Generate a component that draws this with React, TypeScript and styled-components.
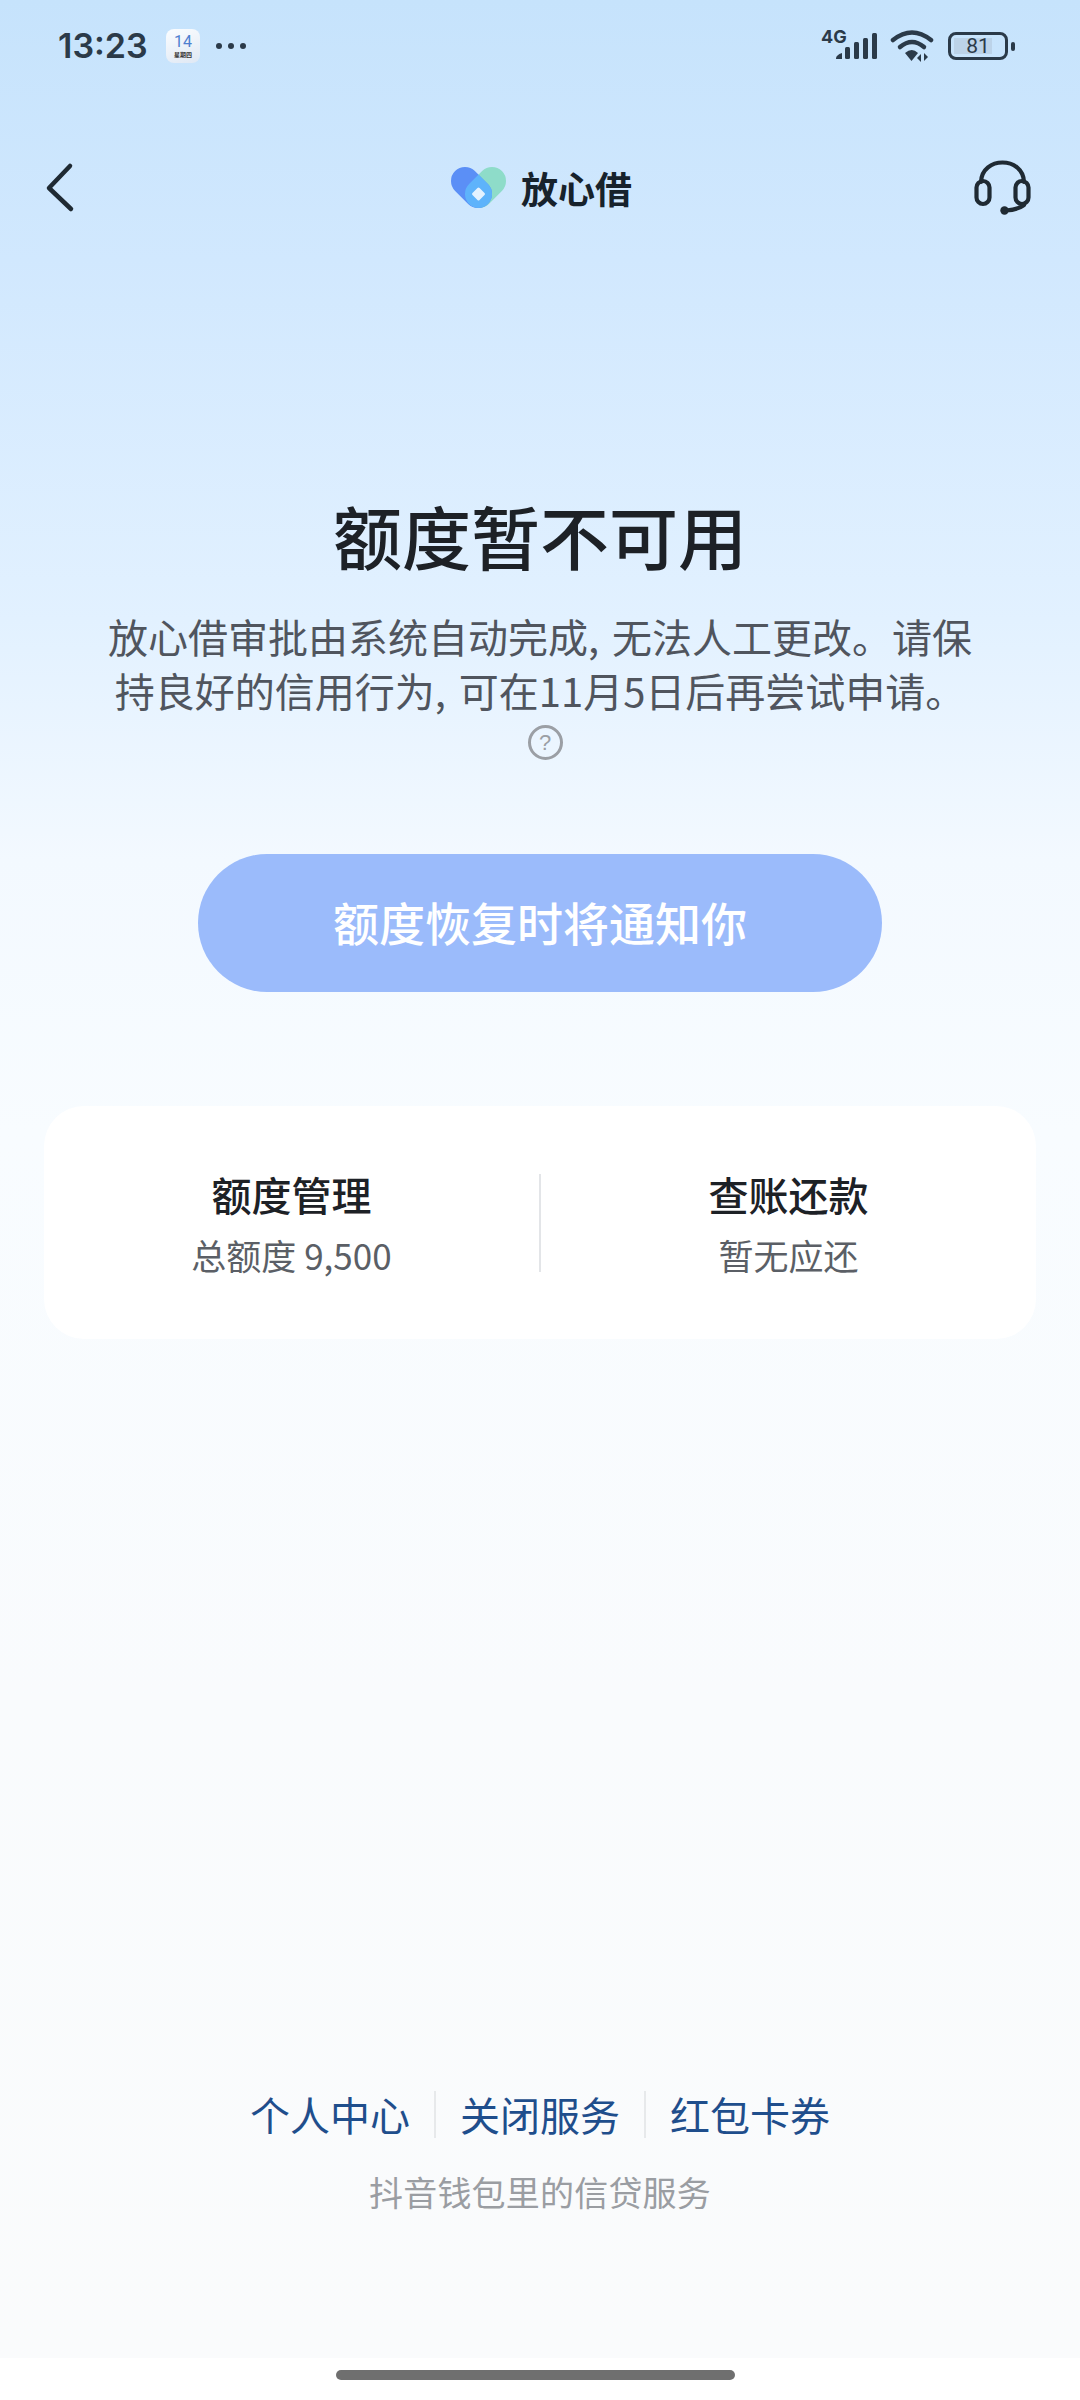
import styled, { createGlobalStyle } from "styled-components";

const GlobalStyle = createGlobalStyle`
  html, body {
    margin: 0;
    padding: 0;
    background: #fff;
    font-family: "Noto Sans CJK SC", "Noto Sans", sans-serif;
  }
`;

const Page = styled.div`
  width: 1080px;
  height: 2400px;
  display: flex;
  flex-direction: column;
  overflow: hidden;
  background: #fff;
`;

const Screen = styled.div`
  height: 2358px;
  display: flex;
  flex-direction: column;
  align-items: center;
  background: linear-gradient(
    180deg,
    #c6e3fc 0,
    #d1e8fe 260px,
    #e2f1ff 620px,
    #f3f9ff 860px,
    #f8fcff 1130px,
    #f9fbfd 1700px,
    #fafbfc 2358px
  );
`;

const StatusBar = styled.div`
  align-self: stretch;
  height: 92px;
  display: flex;
  align-items: center;
  justify-content: space-between;
  padding: 0 65px 0 58px;
  color: #2b3a49;
`;

const StatusGroup = styled.div`
  display: flex;
  align-items: center;
`;

const Clock = styled.span`
  font-family: Inter, Roboto, sans-serif;
  font-size: 34px;
  font-weight: 600;
  line-height: 1;
  width: 108px;
`;

const CalendarIcon = styled.div`
  width: 34px;
  height: 34px;
  border-radius: 8px;
  background: linear-gradient(160deg, #fbfdff, #dfe8f4);
  display: flex;
  flex-direction: column;
  align-items: center;
  margin-right: 16px;
`;

const CalendarDay = styled.span`
  font-family: Roboto, sans-serif;
  font-size: 16px;
  line-height: 18px;
  margin-top: 4px;
  color: #4f7fd0;
`;

const CalendarWeek = styled.span`
  font-size: 6px;
  line-height: 7px;
  font-weight: 700;
  color: #333;
`;

const MoreDots = styled.div`
  display: flex;
  gap: 6px;
`;

const Dot = styled.i`
  width: 6px;
  height: 6px;
  border-radius: 50%;
  background: #2b3a49;
`;

const SignalWrap = styled.div`
  position: relative;
  width: 58px;
  height: 32px;
  margin-right: 11px;
`;

const NetworkLabel = styled.span`
  position: absolute;
  left: 0;
  top: -3px;
  font-family: Inter, Roboto, sans-serif;
  font-size: 18px;
  line-height: 20px;
  font-weight: 700;
`;

const Battery = styled.div`
  position: relative;
  width: 60px;
  height: 28px;
  box-sizing: border-box;
  border: 3px solid #2b3a49;
  border-radius: 8px;
  margin-left: 14px;
  margin-right: 3px;
  display: flex;
  align-items: center;
  justify-content: center;
`;

const BatteryFill = styled.div`
  position: absolute;
  left: 3px;
  top: 3px;
  bottom: 3px;
  background: #bcd3e9;
`;

const BatteryValue = styled.span`
  position: relative;
  font-family: Roboto, sans-serif;
  font-size: 21px;
  line-height: 1;
`;

const BatteryNub = styled.i`
  width: 4px;
  height: 9px;
  border-radius: 2px;
  background: #2b3a49;
`;

const NavBar = styled.div`
  align-self: stretch;
  height: 192px;
  display: flex;
  align-items: center;
  justify-content: space-between;
  padding: 0 48px 0 44px;
`;

const Logo = styled.div`
  display: flex;
  align-items: center;
  gap: 15px;
  margin-left: 31px;
`;

const LogoText = styled.span`
  font-size: 37px;
  font-weight: 700;
  line-height: 1;
  color: #17222c;
`;

const Title = styled.h1`
  margin: 207px 0 0;
  font-size: 69px;
  line-height: 88px;
  font-weight: 500;
  color: #1d2126;
`;

const Description = styled.p`
  margin: 30px 0 0;
  width: 890px;
  font-size: 40px;
  line-height: 54px;
  word-spacing: 4px;
  color: #50555e;
  text-align: center;
`;

const HelpIcon = styled.span`
  display: inline-flex;
  align-items: center;
  justify-content: center;
  box-sizing: border-box;
  width: 35px;
  height: 35px;
  margin: 8px 0 0 10px;
  border: 3px solid #9b9fa5;
  border-radius: 50%;
  font-family: "Liberation Sans", sans-serif;
  font-size: 22px;
  line-height: 1;
  color: #9b9fa5;
  vertical-align: top;
`;

const NotifyButton = styled.button`
  margin-top: 83px;
  width: 684px;
  height: 138px;
  border: 0;
  border-radius: 69px;
  padding: 0 0 5px;
  background: #9bbbfb;
  color: #fff;
  font-family: inherit;
  font-size: 46px;
  font-weight: 500;
`;

const Card = styled.div`
  margin-top: 114px;
  width: 992px;
  height: 233px;
  border-radius: 40px;
  background: #fff;
  display: flex;
  align-items: center;
`;

const CardItem = styled.div`
  flex: 1;
  display: flex;
  flex-direction: column;
  align-items: center;
  gap: 11px;
`;

const CardDivider = styled.div`
  width: 2px;
  height: 98px;
  background: #e3e5e8;
`;

const CardTitle = styled.div`
  font-size: 40px;
  line-height: 54px;
  font-weight: 500;
  color: #1d2126;
`;

const CardSub = styled.div`
  font-size: 35px;
  line-height: 46px;
  color: #5b5f66;
`;

const Footer = styled.div`
  margin-top: auto;
  margin-bottom: 143px;
  display: flex;
  flex-direction: column;
  align-items: center;
  gap: 31px;
`;

const LinkRow = styled.div`
  display: flex;
  align-items: center;
`;

const FooterLink = styled.a`
  font-size: 40px;
  line-height: 48px;
  color: #1f4e8c;
`;

const LinkDivider = styled.i`
  width: 2px;
  height: 47px;
  margin: 0 24px;
  background: #e7e9eb;
`;

const FooterNote = styled.div`
  font-size: 34px;
  line-height: 46px;
  letter-spacing: 0.2px;
  color: #9a9da2;
`;

const HomeArea = styled.div`
  flex: 1;
  display: flex;
  justify-content: center;
  padding-top: 12px;
`;

const HomeBar = styled.div`
  width: 399px;
  height: 10px;
  margin-right: 9px;
  border-radius: 5px;
  background: #6f6f6f;
`;

const SignalBars = () => (
  <svg width="58" height="32" viewBox="0 0 58 32" style={{ position: "absolute", left: 0, top: 0 }}>
    <g fill="#2b3a49">
      <path d="M15 28.5 Q15 25 21 23 V29 H15Z" />
      <rect x="24" y="17" width="5" height="12" rx="1.5" />
      <rect x="33" y="12" width="5" height="17" rx="1.5" />
      <rect x="42" y="8" width="5" height="21" rx="1.5" />
      <rect x="51" y="3" width="5" height="26" rx="1.5" />
    </g>
  </svg>
);

const WifiIcon = () => (
  <svg width="44" height="34" viewBox="0 0 44 34">
    <g fill="none" stroke="#2b3a49" strokeWidth="4.5" strokeLinecap="round">
      <path d="M3 11 Q22 -4 41 11" />
      <path d="M10 18 Q22 8 34 18" />
    </g>
    <path d="M15 24 Q22 18 28 24 L21.5 32Z" fill="#2b3a49" />
    <path d="M31 33V25l-4 4ZM34 24v8l4-4Z" fill="#2b3a49" />
  </svg>
);

const BackIcon = () => (
  <svg width="34" height="52" viewBox="0 0 34 52">
    <path d="M26 4 L5 26 L27 47" fill="none" stroke="#1f2a33" strokeWidth="4.5" strokeLinecap="round" strokeLinejoin="round" />
  </svg>
);

const LogoIcon = () => (
  <svg width="55" height="43" viewBox="0 0 55 43">
    <defs>
      <clipPath id="logo-overlap">
        <rect x="-14" y="-14" width="46.4" height="28" rx="14" transform="translate(14 14) rotate(45)" />
      </clipPath>
    </defs>
    <rect x="-14" y="-14" width="46.4" height="28" rx="14" fill="#8edcc9" transform="translate(41 14) rotate(135)" />
    <rect x="-14" y="-14" width="46.4" height="28" rx="14" fill="#5b8ff6" transform="translate(14 14) rotate(45)" />
    <g clipPath="url(#logo-overlap)">
      <rect x="-14" y="-14" width="46.4" height="28" rx="14" fill="#5eb3fb" transform="translate(41 14) rotate(135)" />
    </g>
    <rect x="-5" y="-5" width="10" height="10" rx="1.5" fill="#e4f2ff" transform="translate(27.5 27) rotate(45)" />
  </svg>
);

const HeadsetIcon = () => (
  <svg width="58" height="56" viewBox="0 0 58 56">
    <g fill="none" stroke="#1f2a33" strokeWidth="4.2" strokeLinecap="round">
      <path d="M7 22 C8 -4 49 -4 50 22" />
      <rect x="2.5" y="21" width="13" height="23" rx="6.5" />
      <rect x="41.5" y="21" width="13" height="23" rx="6.5" />
      <path d="M50 45 C46 48 40 50 32 50.5" />
    </g>
    <circle cx="30.5" cy="50.5" r="4.2" fill="#1f2a33" />
  </svg>
);

export default function App() {
  return (
    <Page>
      <GlobalStyle />
      <Screen>
        <StatusBar>
          <StatusGroup>
            <Clock>13:23</Clock>
            <CalendarIcon>
              <CalendarDay>14</CalendarDay>
              <CalendarWeek>星期四</CalendarWeek>
            </CalendarIcon>
            <MoreDots>
              <Dot />
              <Dot />
              <Dot />
            </MoreDots>
          </StatusGroup>
          <StatusGroup>
            <SignalWrap>
              <NetworkLabel>4G</NetworkLabel>
              <SignalBars />
            </SignalWrap>
            <WifiIcon />
            <Battery>
              <BatteryFill style={{ width: `${81 * 0.86}%` }} />
              <BatteryValue>81</BatteryValue>
            </Battery>
            <BatteryNub />
          </StatusGroup>
        </StatusBar>
        <NavBar>
          <BackIcon />
          <Logo>
            <LogoIcon />
            <LogoText>放心借</LogoText>
          </Logo>
          <HeadsetIcon />
        </NavBar>
        <Title>额度暂不可用</Title>
        <Description>
          放心借审批由系统自动完成, 无法人工更改。请保持良好的信用行为, 可在11月5日后再尝试申请。
          <HelpIcon>?</HelpIcon>
        </Description>
        <NotifyButton>额度恢复时将通知你</NotifyButton>
        <Card>
          <CardItem>
            <CardTitle>额度管理</CardTitle>
            <CardSub>总额度 9,500</CardSub>
          </CardItem>
          <CardDivider />
          <CardItem>
            <CardTitle>查账还款</CardTitle>
            <CardSub>暂无应还</CardSub>
          </CardItem>
        </Card>
        <Footer>
          <LinkRow>
            <FooterLink>个人中心</FooterLink>
            <LinkDivider />
            <FooterLink>关闭服务</FooterLink>
            <LinkDivider />
            <FooterLink>红包卡券</FooterLink>
          </LinkRow>
          <FooterNote>抖音钱包里的信贷服务</FooterNote>
        </Footer>
      </Screen>
      <HomeArea>
        <HomeBar />
      </HomeArea>
    </Page>
  );
}
